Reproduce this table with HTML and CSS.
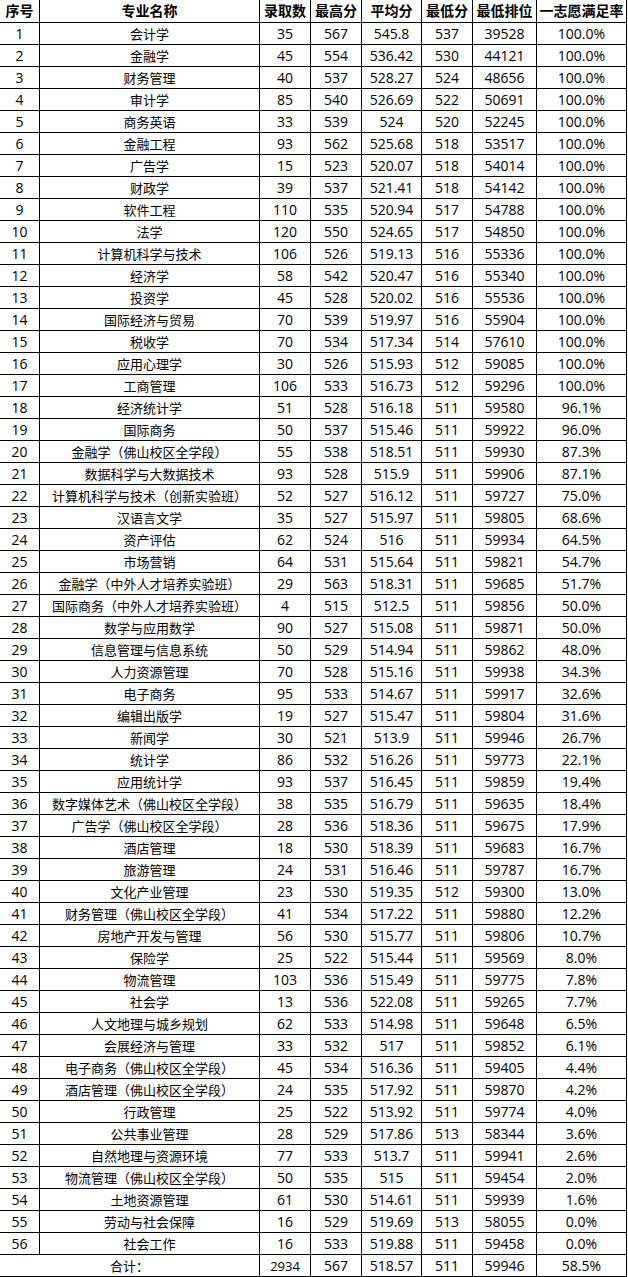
FILE: index.html
```html
<!DOCTYPE html>
<html lang="zh-CN">
<head>
<meta charset="utf-8">
<title>专业录取分数</title>
<link rel="stylesheet" href="styles.css">
</head>
<body>
<div class="sheet">
  <div class="row head"><div class="c">序号</div><div class="c">专业名称</div><div class="c">录取数</div><div class="c">最高分</div><div class="c">平均分</div><div class="c">最低分</div><div class="c">最低排位</div><div class="c">一志愿满足率</div></div>
  <div class="row"><div class="c">1</div><div class="c">会计学</div><div class="c">35</div><div class="c">567</div><div class="c">545.8</div><div class="c">537</div><div class="c">39528</div><div class="c">100.0%</div></div>
  <div class="row"><div class="c">2</div><div class="c">金融学</div><div class="c">45</div><div class="c">554</div><div class="c">536.42</div><div class="c">530</div><div class="c">44121</div><div class="c">100.0%</div></div>
  <div class="row"><div class="c">3</div><div class="c">财务管理</div><div class="c">40</div><div class="c">537</div><div class="c">528.27</div><div class="c">524</div><div class="c">48656</div><div class="c">100.0%</div></div>
  <div class="row"><div class="c">4</div><div class="c">审计学</div><div class="c">85</div><div class="c">540</div><div class="c">526.69</div><div class="c">522</div><div class="c">50691</div><div class="c">100.0%</div></div>
  <div class="row"><div class="c">5</div><div class="c">商务英语</div><div class="c">33</div><div class="c">539</div><div class="c">524</div><div class="c">520</div><div class="c">52245</div><div class="c">100.0%</div></div>
  <div class="row"><div class="c">6</div><div class="c">金融工程</div><div class="c">93</div><div class="c">562</div><div class="c">525.68</div><div class="c">518</div><div class="c">53517</div><div class="c">100.0%</div></div>
  <div class="row"><div class="c">7</div><div class="c">广告学</div><div class="c">15</div><div class="c">523</div><div class="c">520.07</div><div class="c">518</div><div class="c">54014</div><div class="c">100.0%</div></div>
  <div class="row"><div class="c">8</div><div class="c">财政学</div><div class="c">39</div><div class="c">537</div><div class="c">521.41</div><div class="c">518</div><div class="c">54142</div><div class="c">100.0%</div></div>
  <div class="row"><div class="c">9</div><div class="c">软件工程</div><div class="c">110</div><div class="c">535</div><div class="c">520.94</div><div class="c">517</div><div class="c">54788</div><div class="c">100.0%</div></div>
  <div class="row"><div class="c">10</div><div class="c">法学</div><div class="c">120</div><div class="c">550</div><div class="c">524.65</div><div class="c">517</div><div class="c">54850</div><div class="c">100.0%</div></div>
  <div class="row"><div class="c">11</div><div class="c">计算机科学与技术</div><div class="c">106</div><div class="c">526</div><div class="c">519.13</div><div class="c">516</div><div class="c">55336</div><div class="c">100.0%</div></div>
  <div class="row"><div class="c">12</div><div class="c">经济学</div><div class="c">58</div><div class="c">542</div><div class="c">520.47</div><div class="c">516</div><div class="c">55340</div><div class="c">100.0%</div></div>
  <div class="row"><div class="c">13</div><div class="c">投资学</div><div class="c">45</div><div class="c">528</div><div class="c">520.02</div><div class="c">516</div><div class="c">55536</div><div class="c">100.0%</div></div>
  <div class="row"><div class="c">14</div><div class="c">国际经济与贸易</div><div class="c">70</div><div class="c">539</div><div class="c">519.97</div><div class="c">516</div><div class="c">55904</div><div class="c">100.0%</div></div>
  <div class="row"><div class="c">15</div><div class="c">税收学</div><div class="c">70</div><div class="c">534</div><div class="c">517.34</div><div class="c">514</div><div class="c">57610</div><div class="c">100.0%</div></div>
  <div class="row"><div class="c">16</div><div class="c">应用心理学</div><div class="c">30</div><div class="c">526</div><div class="c">515.93</div><div class="c">512</div><div class="c">59085</div><div class="c">100.0%</div></div>
  <div class="row"><div class="c">17</div><div class="c">工商管理</div><div class="c">106</div><div class="c">533</div><div class="c">516.73</div><div class="c">512</div><div class="c">59296</div><div class="c">100.0%</div></div>
  <div class="row"><div class="c">18</div><div class="c">经济统计学</div><div class="c">51</div><div class="c">528</div><div class="c">516.18</div><div class="c">511</div><div class="c">59580</div><div class="c">96.1%</div></div>
  <div class="row"><div class="c">19</div><div class="c">国际商务</div><div class="c">50</div><div class="c">537</div><div class="c">515.46</div><div class="c">511</div><div class="c">59922</div><div class="c">96.0%</div></div>
  <div class="row"><div class="c">20</div><div class="c">金融学（佛山校区全学段）</div><div class="c">55</div><div class="c">538</div><div class="c">518.51</div><div class="c">511</div><div class="c">59930</div><div class="c">87.3%</div></div>
  <div class="row"><div class="c">21</div><div class="c">数据科学与大数据技术</div><div class="c">93</div><div class="c">528</div><div class="c">515.9</div><div class="c">511</div><div class="c">59906</div><div class="c">87.1%</div></div>
  <div class="row"><div class="c">22</div><div class="c">计算机科学与技术（创新实验班）</div><div class="c">52</div><div class="c">527</div><div class="c">516.12</div><div class="c">511</div><div class="c">59727</div><div class="c">75.0%</div></div>
  <div class="row"><div class="c">23</div><div class="c">汉语言文学</div><div class="c">35</div><div class="c">527</div><div class="c">515.97</div><div class="c">511</div><div class="c">59805</div><div class="c">68.6%</div></div>
  <div class="row"><div class="c">24</div><div class="c">资产评估</div><div class="c">62</div><div class="c">524</div><div class="c">516</div><div class="c">511</div><div class="c">59934</div><div class="c">64.5%</div></div>
  <div class="row"><div class="c">25</div><div class="c">市场营销</div><div class="c">64</div><div class="c">531</div><div class="c">515.64</div><div class="c">511</div><div class="c">59821</div><div class="c">54.7%</div></div>
  <div class="row"><div class="c">26</div><div class="c">金融学（中外人才培养实验班）</div><div class="c">29</div><div class="c">563</div><div class="c">518.31</div><div class="c">511</div><div class="c">59685</div><div class="c">51.7%</div></div>
  <div class="row"><div class="c">27</div><div class="c">国际商务（中外人才培养实验班）</div><div class="c">4</div><div class="c">515</div><div class="c">512.5</div><div class="c">511</div><div class="c">59856</div><div class="c">50.0%</div></div>
  <div class="row"><div class="c">28</div><div class="c">数学与应用数学</div><div class="c">90</div><div class="c">527</div><div class="c">515.08</div><div class="c">511</div><div class="c">59871</div><div class="c">50.0%</div></div>
  <div class="row"><div class="c">29</div><div class="c">信息管理与信息系统</div><div class="c">50</div><div class="c">529</div><div class="c">514.94</div><div class="c">511</div><div class="c">59862</div><div class="c">48.0%</div></div>
  <div class="row"><div class="c">30</div><div class="c">人力资源管理</div><div class="c">70</div><div class="c">528</div><div class="c">515.16</div><div class="c">511</div><div class="c">59938</div><div class="c">34.3%</div></div>
  <div class="row"><div class="c">31</div><div class="c">电子商务</div><div class="c">95</div><div class="c">533</div><div class="c">514.67</div><div class="c">511</div><div class="c">59917</div><div class="c">32.6%</div></div>
  <div class="row"><div class="c">32</div><div class="c">编辑出版学</div><div class="c">19</div><div class="c">527</div><div class="c">515.47</div><div class="c">511</div><div class="c">59804</div><div class="c">31.6%</div></div>
  <div class="row"><div class="c">33</div><div class="c">新闻学</div><div class="c">30</div><div class="c">521</div><div class="c">513.9</div><div class="c">511</div><div class="c">59946</div><div class="c">26.7%</div></div>
  <div class="row"><div class="c">34</div><div class="c">统计学</div><div class="c">86</div><div class="c">532</div><div class="c">516.26</div><div class="c">511</div><div class="c">59773</div><div class="c">22.1%</div></div>
  <div class="row"><div class="c">35</div><div class="c">应用统计学</div><div class="c">93</div><div class="c">537</div><div class="c">516.45</div><div class="c">511</div><div class="c">59859</div><div class="c">19.4%</div></div>
  <div class="row"><div class="c">36</div><div class="c">数字媒体艺术（佛山校区全学段）</div><div class="c">38</div><div class="c">535</div><div class="c">516.79</div><div class="c">511</div><div class="c">59635</div><div class="c">18.4%</div></div>
  <div class="row"><div class="c">37</div><div class="c">广告学（佛山校区全学段）</div><div class="c">28</div><div class="c">536</div><div class="c">518.36</div><div class="c">511</div><div class="c">59675</div><div class="c">17.9%</div></div>
  <div class="row"><div class="c">38</div><div class="c">酒店管理</div><div class="c">18</div><div class="c">530</div><div class="c">518.39</div><div class="c">511</div><div class="c">59683</div><div class="c">16.7%</div></div>
  <div class="row"><div class="c">39</div><div class="c">旅游管理</div><div class="c">24</div><div class="c">531</div><div class="c">516.46</div><div class="c">511</div><div class="c">59787</div><div class="c">16.7%</div></div>
  <div class="row"><div class="c">40</div><div class="c">文化产业管理</div><div class="c">23</div><div class="c">530</div><div class="c">519.35</div><div class="c">512</div><div class="c">59300</div><div class="c">13.0%</div></div>
  <div class="row"><div class="c">41</div><div class="c">财务管理（佛山校区全学段）</div><div class="c">41</div><div class="c">534</div><div class="c">517.22</div><div class="c">511</div><div class="c">59880</div><div class="c">12.2%</div></div>
  <div class="row"><div class="c">42</div><div class="c">房地产开发与管理</div><div class="c">56</div><div class="c">530</div><div class="c">515.77</div><div class="c">511</div><div class="c">59806</div><div class="c">10.7%</div></div>
  <div class="row"><div class="c">43</div><div class="c">保险学</div><div class="c">25</div><div class="c">522</div><div class="c">515.44</div><div class="c">511</div><div class="c">59569</div><div class="c">8.0%</div></div>
  <div class="row"><div class="c">44</div><div class="c">物流管理</div><div class="c">103</div><div class="c">536</div><div class="c">515.49</div><div class="c">511</div><div class="c">59775</div><div class="c">7.8%</div></div>
  <div class="row"><div class="c">45</div><div class="c">社会学</div><div class="c">13</div><div class="c">536</div><div class="c">522.08</div><div class="c">511</div><div class="c">59265</div><div class="c">7.7%</div></div>
  <div class="row"><div class="c">46</div><div class="c">人文地理与城乡规划</div><div class="c">62</div><div class="c">533</div><div class="c">514.98</div><div class="c">511</div><div class="c">59648</div><div class="c">6.5%</div></div>
  <div class="row"><div class="c">47</div><div class="c">会展经济与管理</div><div class="c">33</div><div class="c">532</div><div class="c">517</div><div class="c">511</div><div class="c">59852</div><div class="c">6.1%</div></div>
  <div class="row"><div class="c">48</div><div class="c">电子商务（佛山校区全学段）</div><div class="c">45</div><div class="c">534</div><div class="c">516.36</div><div class="c">511</div><div class="c">59405</div><div class="c">4.4%</div></div>
  <div class="row"><div class="c">49</div><div class="c">酒店管理（佛山校区全学段）</div><div class="c">24</div><div class="c">535</div><div class="c">517.92</div><div class="c">511</div><div class="c">59870</div><div class="c">4.2%</div></div>
  <div class="row"><div class="c">50</div><div class="c">行政管理</div><div class="c">25</div><div class="c">522</div><div class="c">513.92</div><div class="c">511</div><div class="c">59774</div><div class="c">4.0%</div></div>
  <div class="row"><div class="c">51</div><div class="c">公共事业管理</div><div class="c">28</div><div class="c">529</div><div class="c">517.86</div><div class="c">513</div><div class="c">58344</div><div class="c">3.6%</div></div>
  <div class="row"><div class="c">52</div><div class="c">自然地理与资源环境</div><div class="c">77</div><div class="c">533</div><div class="c">513.7</div><div class="c">511</div><div class="c">59941</div><div class="c">2.6%</div></div>
  <div class="row"><div class="c">53</div><div class="c">物流管理（佛山校区全学段）</div><div class="c">50</div><div class="c">535</div><div class="c">515</div><div class="c">511</div><div class="c">59454</div><div class="c">2.0%</div></div>
  <div class="row"><div class="c">54</div><div class="c">土地资源管理</div><div class="c">61</div><div class="c">530</div><div class="c">514.61</div><div class="c">511</div><div class="c">59939</div><div class="c">1.6%</div></div>
  <div class="row"><div class="c">55</div><div class="c">劳动与社会保障</div><div class="c">16</div><div class="c">529</div><div class="c">519.69</div><div class="c">513</div><div class="c">58055</div><div class="c">0.0%</div></div>
  <div class="row"><div class="c">56</div><div class="c">社会工作</div><div class="c">16</div><div class="c">533</div><div class="c">519.88</div><div class="c">511</div><div class="c">59458</div><div class="c">0.0%</div></div>
  <div class="row total"><div class="c span2">合计：</div><div class="c">2934</div><div class="c">567</div><div class="c">518.57</div><div class="c">511</div><div class="c">59946</div><div class="c">58.5%</div></div>
</div>
</body>
</html>
```

FILE: styles.css
```css
html, body {
  margin: 0;
  padding: 0;
  background: #fff;
}

.sheet {
  width: 627px;
  font-family: "Open Sans", "Noto Sans CJK SC", sans-serif;
  font-size: 14px;
  color: #000;
}

.row {
  display: grid;
  grid-template-columns: 40px 220px 51px 51px 60px 51px 64px 90px;
  height: 22px;
}

.row.head {
  height: 23px;
  font-weight: bold;
}

.c {
  box-sizing: border-box;
  border-right: 1px solid #000;
  border-bottom: 1px solid #000;
  display: flex;
  align-items: center;
  justify-content: center;
  white-space: nowrap;
  line-height: 18px;
  overflow: hidden;
}

.row:not(.head) .c:nth-child(2),
.span2 {
  font-size: 13px;
}

.span2 {
  grid-column: span 2;
}
```
